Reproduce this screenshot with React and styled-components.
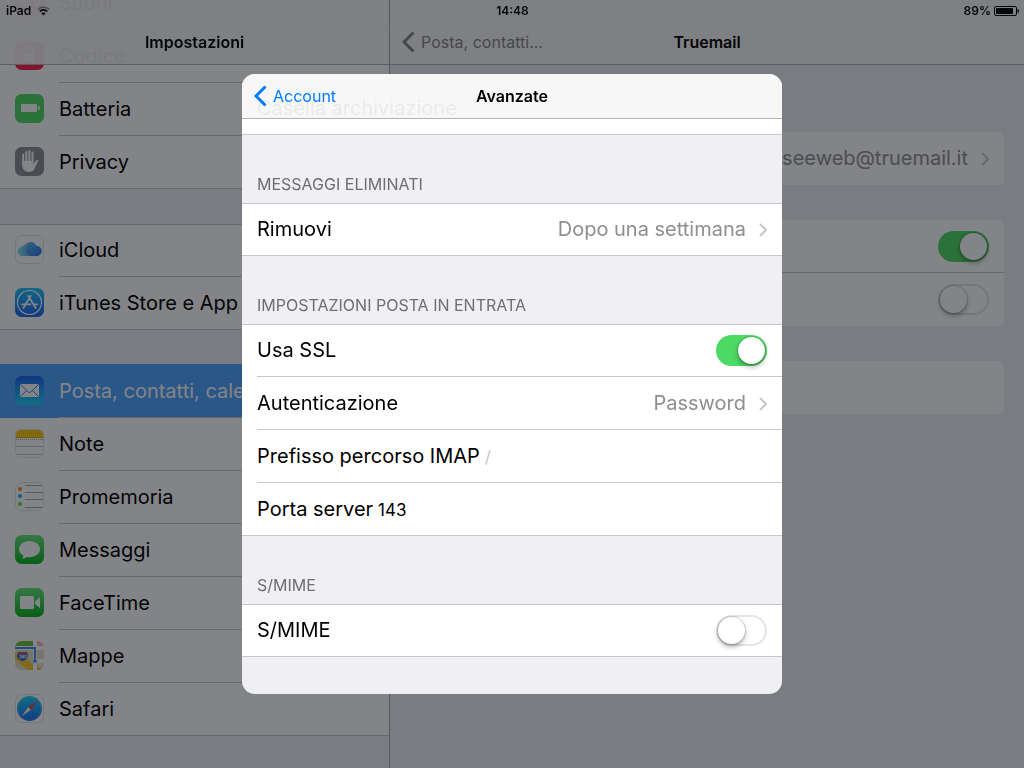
import React, { useLayoutEffect, useRef, useState } from "react"
import styled, { createGlobalStyle, css } from "styled-components"

const GlobalStyle = createGlobalStyle`
  * {
    box-sizing: border-box;
  }

  body {
    margin: 0;
    background: #efeff4;
    color: #000;
    font-family: Inter, "Liberation Sans", sans-serif;
    font-size: 20px;
  }

  button,
  input {
    font: inherit;
    color: inherit;
  }
`

const Screen = styled.div`
  display: flex;
  height: 100vh;
  overflow: hidden;
`

const Scroller = styled.div`
  height: 100%;
  overflow-y: auto;
  scrollbar-width: none;
`

const Sidebar = styled.aside`
  flex: 0 0 38%;
  box-sizing: content-box;
  border-right: 1px solid #a7a7ac;
`

const Detail = styled.main`
  flex: 1;
  min-width: 0;
`

const NavBar = styled.header`
  position: sticky;
  top: 0;
  z-index: 1;
  display: grid;
  grid-template-columns: 1fr auto 1fr;
  align-items: center;
  height: ${(props) => (props.$tall ? 65 : 45)}px;
  padding: ${(props) => (props.$tall ? 20 : 0)}px 12px 0;
  background: rgba(247, 247, 247, 0.95);
  border-bottom: 1px solid #b2b2b2;
`

const NavTitle = styled.h1`
  grid-column: 2;
  margin: 0;
  font-size: 16px;
  font-weight: 600;
  line-height: 20px;
`

const BackButton = styled.button`
  display: flex;
  align-items: center;
  gap: 6px;
  padding: 0;
  border: 0;
  background: none;
  color: ${(props) => (props.$muted ? "#858588" : "#007aff")};
  font-size: 16px;
  line-height: 20px;
`

const StatusBar = styled.div`
  position: fixed;
  top: 0;
  left: 0;
  right: 0;
  z-index: 2;
  display: grid;
  grid-template-columns: 1fr auto 1fr;
  align-items: center;
  height: 21px;
  padding: 0 5px 0 6px;
  font-size: 12px;
  font-weight: 600;
`

const StatusSide = styled.div`
  display: flex;
  align-items: center;
  justify-content: ${(props) => (props.$end ? "flex-end" : "flex-start")};
  gap: ${(props) => (props.$end ? 3 : 6)}px;
`

const GroupList = styled.nav`
  display: flex;
  flex-direction: column;
  gap: 35px;
  padding-bottom: 120px;
`

const Group = styled.div`
  display: flex;
  flex-direction: column;
`

const rowBase = css`
  display: flex;
  align-items: stretch;
  width: 100%;
  height: 53px;
  padding: 0 0 0 15px;
  border: 0 solid #c8c7cc;
  background: #fff;
  color: #000;
  text-align: left;
  text-decoration: none;

  &:first-child {
    box-shadow: inset 0 1px #c8c7cc;
  }

  &:last-child {
    border-bottom-width: 1px;
  }
`

const RowBody = styled.span`
  flex: 1;
  display: flex;
  align-items: center;
  min-width: 0;
  padding-right: 15px;
  border-bottom: 1px solid #c8c7cc;
  line-height: 24px;
  white-space: nowrap;

  *:last-child > & {
    border-bottom: 0;
  }
`

const MenuLink = styled.a`
  ${rowBase}

  svg {
    flex: none;
    margin-top: 11px;
    margin-right: 15px;
  }

  ${(props) =>
    props.$selected &&
    css`
      background: #4ca4fe;
      color: #fff;

      &:first-child {
        box-shadow: 0 -1px #4ca4fe;
      }
    `}
`

const ButtonRow = styled.button`
  ${rowBase}
`

const LabelRow = styled.label`
  ${rowBase}
`

const Value = styled.span`
  margin-left: auto;
  margin-right: 13px;
  color: #8e8e93;
`

const DisclosureIcon = styled.svg`
  flex: none;
  margin-top: 2px;
`

const SectionTitle = styled.h2`
  display: flex;
  align-items: flex-end;
  height: 68px;
  margin: 0;
  padding: 0 15px 9px;
  color: #6d6d72;
  font-size: 16px;
  font-weight: 400;
  line-height: 20px;
`

const TextField = styled.input`
  flex: 1;
  min-width: 0;
  margin-left: 5px;
  padding: 2px 0 0;
  border: 0;
  outline: 0;
  background: none;
  font-size: 17px;

  &::placeholder {
    color: #c7c7cc;
    opacity: 1;
  }
`

const Switch = styled.input`
  appearance: none;
  flex: none;
  width: 51px;
  height: 31px;
  margin: 1px 0 0 auto;
  padding: 2px;
  border-radius: 16px;
  background: #fff;
  box-shadow: inset 0 0 0 2px #e5e5e5;

  &::before {
    content: "";
    display: block;
    width: 27px;
    height: 27px;
    border-radius: 50%;
    background: #fff;
    box-shadow: 0 0 1px 1px rgba(0, 0, 0, 0.14), 0 3px 5px rgba(0, 0, 0, 0.3);
  }

  &:checked {
    background: #4cd964;
    box-shadow: none;
  }

  &:checked::before {
    margin-left: auto;
  }
`

const Cards = styled.div`
  display: flex;
  flex-direction: column;
  gap: 35px;
  padding: 67px 20px 35px;
`

const Card = styled.div`
  overflow: hidden;
  border-radius: 5px;
  background: #fff;

  > *,
  > *:first-child {
    border-color: transparent;
    background: none;
    box-shadow: none;
  }
`

const Backdrop = styled.div`
  position: fixed;
  inset: 0;
  z-index: 3;
  display: grid;
  place-items: center;
  background: rgba(8, 9, 16, 0.5);
`

const Sheet = styled.section`
  width: min(540px, 100%);
  height: min(620px, 100%);
  overflow: hidden;
  border-radius: 13px;
  background: #efeff4;
`

const BackChevron = () => (
  <svg width="13" height="22" viewBox="0 0 13 22" aria-hidden="true">
    <path d="M11.5 1.5 2 11l9.500 9.500" fill="none" stroke="currentColor" strokeWidth="3" />
  </svg>
)

const Disclosure = () => (
  <DisclosureIcon width="8" height="14" viewBox="0 0 8 14" aria-hidden="true">
    <path d="M1 1l6 6-6 6" fill="none" stroke="#c7c7cc" strokeWidth="2" />
  </DisclosureIcon>
)

const Wifi = () => (
  <svg width="13" height="10" viewBox="0 0 13 10" aria-hidden="true">
    <path d="M.8 3.400a8.200 8.200 0 0 1 11.400 0" fill="none" stroke="#000" strokeOpacity=".4" strokeWidth="1.700" />
    <path d="M2.700 5.500a5.400 5.400 0 0 1 7.600 0" fill="none" stroke="#000" strokeWidth="1.700" />
    <path d="M4.300 7.200a3.200 3.200 0 0 1 4.400 0L6.500 9.500z" />
  </svg>
)

const StatusBattery = () => (
  <svg width="25" height="10" viewBox="0 0 25 10" aria-hidden="true">
    <rect x=".5" y=".5" width="22" height="9" rx="1.500" fill="none" stroke="#000" />
    <rect x="2" y="2" width="17" height="6" rx=".5" />
    <path d="M23.500 3q1.500 0 1.500 2t-1.500 2z" />
  </svg>
)

const Tile = ({ fill, outlined, children }) => (
  <svg width="29" height="29" viewBox="0 0 29 29" aria-hidden="true">
    <rect width="29" height="29" rx="6.500" fill={fill} />
    {children}
    {outlined && (
      <rect x=".5" y=".5" width="28" height="28" rx="6" fill="none" stroke="#e2e2e6" />
    )}
  </svg>
)

const Gradient = ({ id, from, to, flat }) => (
  <linearGradient id={id} x1="0" y1="0" x2={flat ? 1 : 0} y2={flat ? 0 : 1}>
    <stop stopColor={from} />
    <stop offset="1" stopColor={to} />
  </linearGradient>
)

const icons = {
  sounds: (
    <Tile fill="#ff2d55">
      <path d="M6 11h4l6-5v17l-6-5H6z" fill="#fff" />
      <path d="M19 10q3 4.500 0 9M22 7q5 7.500 0 15" fill="none" stroke="#fff" strokeWidth="2" />
    </Tile>
  ),
  passcode: (
    <Tile fill="#ff1f4b">
      <path d="M11 13v-3.500a3.500 3.500 0 0 1 7 0V13" fill="none" stroke="#fff" strokeWidth="2" />
      <rect x="9" y="12.500" width="11" height="8.500" rx="1" fill="#fff" />
      <circle cx="14.500" cy="15.800" r="1.300" fill="#ff1f4b" />
      <path d="M14.500 16v3" stroke="#ff1f4b" strokeWidth="1.200" />
    </Tile>
  ),
  battery: (
    <Tile fill="#4cd964">
      <rect x="6" y="10" width="16" height="8" rx="1" fill="#fff" />
      <path d="M23 11.800q2 .5 2 2.200t-2 2.200z" fill="#fff" />
    </Tile>
  ),
  privacy: (
    <Tile fill="#8e8e93">
      <g fill="none" stroke="#fff" strokeWidth="2" strokeLinecap="round">
        <path d="M8.200 7.500V17M11.300 5V15M14.400 4v11M17.500 5.500V15" />
      </g>
      <path d="M7.200 14h11.300v3.500l2.100-3.200q.8-1.300 2.200-1.200.5.100.2.800l-3.300 7.600Q18 25 13.800 25q-5.600 0-6.600-6z" fill="#fff" />
    </Tile>
  ),
  icloud: (
    <Tile fill="#fff" outlined>
      <defs>
        <Gradient id="cloud" from="#84e0f2" to="#2877ee" flat />
        <Gradient id="cloudTop" from="#4db5f0" to="#2a72e2" />
      </defs>
      <path d="M7.500 21a4.600 4.600 0 0 1-.3-9.200 4.300 4.300 0 0 1 3.700-2.500A6.200 6.200 0 0 1 21.500 11a5 5 0 0 1 .5 10z" fill="url(#cloud)" />
      <path d="M10.800 13.500A5.700 5.700 0 0 1 21.600 11.200 5 5 0 0 1 22 21h-6q-5-2-5.200-7.500z" fill="url(#cloudTop)" opacity=".55" />
    </Tile>
  ),
  store: (
    <Tile fill="url(#storeBg)">
      <defs>
        <Gradient id="storeBg" from="#1fc4f7" to="#1d62f0" />
      </defs>
      <circle cx="14.500" cy="14.500" r="12" fill="none" stroke="#fff" strokeWidth="1.200" />
      <path d="M13.200 7.800 20.700 20M15.800 7.800 8.300 20M7 16.300h8.500M18.500 16.300H22" fill="none" stroke="#fff" strokeWidth="1.700" strokeLinecap="round" />
    </Tile>
  ),
  mail: (
    <Tile fill="url(#mailBg)">
      <defs>
        <Gradient id="mailBg" from="#1d62f0" to="#19d5fd" />
      </defs>
      <rect x="5" y="8" width="19" height="13" rx="1" fill="#fff" />
      <path d="m5.500 8.500 7.500 7.300q1.500 1.400 3 0l7.500-7.300M5.500 20.500l6-6M23.500 20.500l-6-6" fill="none" stroke="#2a8af3" strokeWidth="1" />
    </Tile>
  ),
  notes: (
    <Tile fill="#fff" outlined>
      <path d="M0 9V6.500A6.500 6.500 0 0 1 6.500 0h16A6.500 6.500 0 0 1 29 6.500V9z" fill="#fdc90d" />
      <path d="M0 8.500h29" stroke="#d8a800" />
      <path d="M1 10.500h27" stroke="#a8a8a8" strokeDasharray="1 1" />
      <path d="M0 17.500h29M2 25.500h25" stroke="#c4c4c8" />
    </Tile>
  ),
  reminders: (
    <Tile fill="#fff" outlined>
      <path d="M10 3.500h18M10 10.500h19M10 17.500h19M10 25.500h18" stroke="#a9a9ae" />
      <circle cx="5" cy="7" r="2" fill="#ff9500" />
      <circle cx="5" cy="14" r="2" fill="#1badf8" />
      <circle cx="5" cy="22" r="2" fill="#63da38" />
    </Tile>
  ),
  messages: (
    <Tile fill="url(#green)">
      <defs>
        <Gradient id="green" from="#63e57a" to="#08b51c" />
      </defs>
      <path d="M14.500 6C8.700 6 4 9.600 4 14.100c0 2.700 1.700 5.100 4.400 6.600 0 1.200-.5 2.200-1.300 3 1.900-.1 3.500-.7 4.600-1.700.9.200 1.800.3 2.800.3 5.800 0 10.500-3.700 10.500-8.200S20.300 6 14.500 6z" fill="#fff" />
    </Tile>
  ),
  facetime: (
    <Tile fill="url(#greenVideo)">
      <defs>
        <Gradient id="greenVideo" from="#63e57a" to="#08b51c" />
      </defs>
      <rect x="5" y="8" width="14" height="13" rx="1.500" fill="#fff" />
      <path d="M20 13.500 25 9v11l-5-4z" fill="#fff" />
    </Tile>
  ),
  maps: (
    <svg width="29" height="29" viewBox="0 0 29 29" aria-hidden="true">
      <clipPath id="mapsTile">
        <rect width="29" height="29" rx="6.500" />
      </clipPath>
      <g clipPath="url(#mapsTile)">
        <path d="M0 0h29v29H0z" fill="#e4ddc4" />
        <path d="M0 0h18v5H0z" fill="#6dc43c" />
        <path d="M22 0h7v5h-7z" fill="#f5b7c6" />
        <path d="M0 12 0 18 13 29h9l-9-10z" fill="#f9c921" />
        <path d="M22 27h7v2h-7z" fill="#f5a623" />
        <path d="M18 0h4v29h-4zM22 5h7v4h-7zM22 18h7v4h-7z" fill="#fff" />
        <path d="M0 5h22v4H0z" fill="#fff" />
        <path d="M0 7h20v13" fill="none" stroke="#3b8df2" strokeWidth="2" />
        <circle cx="20" cy="20" r="2" fill="#3b8df2" stroke="#bcdcff" strokeWidth=".6" />
        <path d="M3.500 11q4 1 8 0 2.500 4 .5 6.500-1.500 1.500-4.500 2.500-3-1-4.500-2.500-2-2.500.5-6.500z" fill="#2a68cf" />
        <path d="M3.500 11q4 1 8 0l.8 2H2.700z" fill="#d8353f" />
        <path d="M4 14h2v3H4M7 14h1.500v3H7zM7 15.500h1.500M9.800 14h1.500v3H9.800z" fill="none" stroke="#fff" strokeWidth=".7" />
      </g>
    </svg>
  ),
  safari: (
    <Tile fill="#fff" outlined>
      <defs>
        <Gradient id="compass" from="#1ad1f9" to="#1c6cf0" />
      </defs>
      <circle cx="14.500" cy="14.500" r="12.500" fill="url(#compass)" />
      <circle cx="14.500" cy="14.500" r="11.300" fill="none" stroke="#fff" strokeOpacity=".4" strokeDasharray=".6 1.100" />
      <path d="m22.500 6.500-9.300 6.700 2.600 2.600z" fill="#ff3b30" />
      <path d="m6.500 22.500 6.700-9.300 2.600 2.600z" fill="#fff" />
    </Tile>
  ),
}

const menu = [
  [
    { icon: "sounds", label: "Suoni" },
    { icon: "passcode", label: "Codice" },
    { icon: "battery", label: "Batteria" },
    { icon: "privacy", label: "Privacy" },
  ],
  [
    { icon: "icloud", label: "iCloud" },
    { icon: "store", label: "iTunes Store e App Store" },
  ],
  [
    { icon: "mail", label: "Posta, contatti, calendari", selected: true },
    { icon: "notes", label: "Note" },
    { icon: "reminders", label: "Promemoria" },
    { icon: "messages", label: "Messaggi" },
    { icon: "facetime", label: "FaceTime" },
    { icon: "maps", label: "Mappe" },
    { icon: "safari", label: "Safari" },
  ],
]

// Scrolls the element to the given offset once it is mounted
function useScrollStart(offset) {
  const ref = useRef(null)

  useLayoutEffect(() => {
    ref.current.scrollTop = offset
  }, [offset])

  return ref
}

function SettingsMenu() {
  const ref = useScrollStart(88)

  const renderItem = (item) => (
    <MenuLink
      key={item.icon}
      href={`#${item.icon}`}
      $selected={item.selected}
      aria-current={item.selected ? "page" : undefined}
    >
      {icons[item.icon]}
      <RowBody>{item.label}</RowBody>
    </MenuLink>
  )

  return (
    <Sidebar>
      <Scroller ref={ref}>
        <NavBar $tall>
          <NavTitle>Impostazioni</NavTitle>
        </NavBar>
        <GroupList>
          {menu.map((group) => (
            <Group key={group[0].icon}>{group.map(renderItem)}</Group>
          ))}
        </GroupList>
      </Scroller>
    </Sidebar>
  )
}

function AccountDetail() {
  const [mail, setMail] = useState(true)
  const [notes, setNotes] = useState(false)

  return (
    <Detail>
      <NavBar $tall>
        <BackButton $muted>
          <BackChevron />
          Posta, contatti...
        </BackButton>
        <NavTitle>Truemail</NavTitle>
      </NavBar>
      <Cards>
        <Card>
          <ButtonRow>
            <RowBody>
              <Value>seeweb@truemail.it</Value>
              <Disclosure />
            </RowBody>
          </ButtonRow>
        </Card>
        <Card>
          <LabelRow>
            <RowBody>
              <Switch
                type="checkbox"
                aria-label="Posta"
                checked={mail}
                onChange={() => setMail(!mail)}
              />
            </RowBody>
          </LabelRow>
          <LabelRow>
            <RowBody>
              <Switch
                type="checkbox"
                aria-label="Note"
                checked={notes}
                onChange={() => setNotes(!notes)}
              />
            </RowBody>
          </LabelRow>
        </Card>
        <Card>
          <ButtonRow aria-label="Elimina account" />
        </Card>
      </Cards>
    </Detail>
  )
}

function AdvancedSheet() {
  const ref = useScrollStart(37)
  const [ssl, setSsl] = useState(true)
  const [smime, setSmime] = useState(false)
  const [prefix, setPrefix] = useState("")
  const [port, setPort] = useState("143")

  return (
    <Sheet role="dialog" aria-labelledby="sheet-title">
      <Scroller ref={ref}>
        <NavBar>
          <BackButton>
            <BackChevron />
            Account
          </BackButton>
          <NavTitle id="sheet-title">Avanzate</NavTitle>
        </NavBar>
        <Group>
          <ButtonRow>
            <RowBody>Casella archiviazione</RowBody>
          </ButtonRow>
        </Group>
        <SectionTitle>MESSAGGI ELIMINATI</SectionTitle>
        <Group>
          <ButtonRow>
            <RowBody>
              Rimuovi
              <Value>Dopo una settimana</Value>
              <Disclosure />
            </RowBody>
          </ButtonRow>
        </Group>
        <SectionTitle>IMPOSTAZIONI POSTA IN ENTRATA</SectionTitle>
        <Group>
          <LabelRow>
            <RowBody>
              Usa SSL
              <Switch type="checkbox" checked={ssl} onChange={() => setSsl(!ssl)} />
            </RowBody>
          </LabelRow>
          <ButtonRow>
            <RowBody>
              Autenticazione
              <Value>Password</Value>
              <Disclosure />
            </RowBody>
          </ButtonRow>
          <LabelRow>
            <RowBody>
              Prefisso percorso IMAP
              <TextField
                placeholder="/"
                value={prefix}
                onChange={(e) => setPrefix(e.target.value)}
              />
            </RowBody>
          </LabelRow>
          <LabelRow>
            <RowBody>
              Porta server
              <TextField value={port} onChange={(e) => setPort(e.target.value)} />
            </RowBody>
          </LabelRow>
        </Group>
        <SectionTitle>S/MIME</SectionTitle>
        <Group>
          <LabelRow>
            <RowBody>
              S/MIME
              <Switch
                type="checkbox"
                checked={smime}
                onChange={() => setSmime(!smime)}
              />
            </RowBody>
          </LabelRow>
        </Group>
        <SectionTitle as="div" />
      </Scroller>
    </Sheet>
  )
}

export default function App() {
  return (
    <>
      <GlobalStyle />
      <Screen>
        <SettingsMenu />
        <AccountDetail />
      </Screen>
      <StatusBar>
        <StatusSide>
          iPad
          <Wifi />
        </StatusSide>
        <span>14:48</span>
        <StatusSide $end>
          89%
          <StatusBattery />
        </StatusSide>
      </StatusBar>
      <Backdrop>
        <AdvancedSheet />
      </Backdrop>
    </>
  )
}
